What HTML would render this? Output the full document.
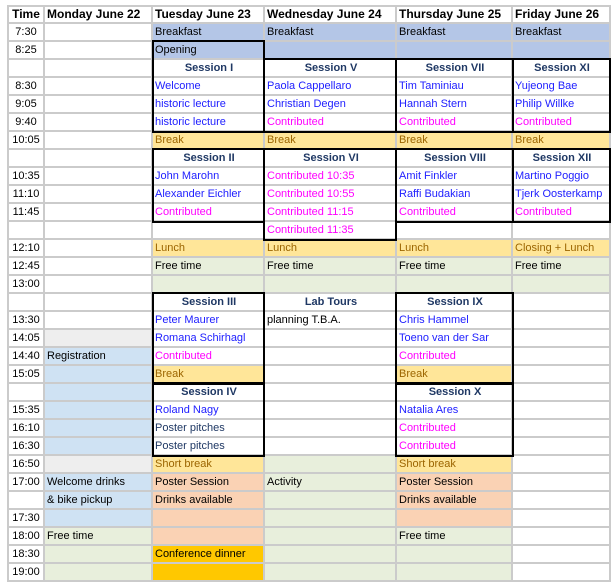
<!DOCTYPE html>
<html><head><meta charset="utf-8"><style>
html,body{margin:0;padding:0;background:#fff;width:616px;height:587px;overflow:hidden;position:relative}
table{position:absolute;left:7px;top:5px;border-collapse:collapse;table-layout:fixed;font-family:"Liberation Sans",Arial,sans-serif;font-size:11px;border:2px solid #cbcbcb}
td{border:2px solid #cbcbcb;height:16px;padding:0 0 0 2px;white-space:nowrap;overflow:hidden;line-height:16px;color:#000}
tr.h td{height:15px;font-weight:bold;font-size:12px;line-height:15px}
td.t{text-align:center;padding:0}
.B{background:#b4c6e7}.Y{background:#ffe699;color:#9c6500}.G{background:#e8efdc}.P{background:#fad2b4}.O{background:#ffc800}
.L{background:#cfe2f3}.g{background:#eeeeee}
.bl{color:#2020ff}.m{color:#ff00ff}.n{color:#1f3864}
.s{text-align:center;font-weight:bold;color:#1f3864}
.k{text-align:center;font-weight:bold;color:#1f3864}
.box{position:absolute;border:2px solid #000;box-sizing:border-box;pointer-events:none}
</style></head><body>
<table>
<colgroup><col style="width:36px"><col style="width:108px"><col style="width:112px"><col style="width:132px"><col style="width:116px"><col style="width:98px"></colgroup>
<tr class="h"><td class="t">Time</td><td>Monday June 22</td><td>Tuesday June 23</td><td>Wednesday June 24</td><td>Thursday June 25</td><td>Friday June 26</td></tr>
<tr><td class="t">7:30</td><td></td><td class="B">Breakfast</td><td class="B">Breakfast</td><td class="B">Breakfast</td><td class="B">Breakfast</td></tr>
<tr><td class="t">8:25</td><td></td><td class="B">Opening</td><td class="B"></td><td class="B"></td><td class="B"></td></tr>
<tr><td class="t"></td><td></td><td class="s">Session I</td><td class="s">Session V</td><td class="s">Session VII</td><td class="s">Session XI</td></tr>
<tr><td class="t">8:30</td><td></td><td class="bl">Welcome</td><td class="bl">Paola Cappellaro</td><td class="bl">Tim Taminiau</td><td class="bl">Yujeong Bae</td></tr>
<tr><td class="t">9:05</td><td></td><td class="bl">historic lecture</td><td class="bl">Christian Degen</td><td class="bl">Hannah Stern</td><td class="bl">Philip Willke</td></tr>
<tr><td class="t">9:40</td><td></td><td class="bl">historic lecture</td><td class="m">Contributed</td><td class="m">Contributed</td><td class="m">Contributed</td></tr>
<tr><td class="t">10:05</td><td></td><td class="Y">Break</td><td class="Y">Break</td><td class="Y">Break</td><td class="Y">Break</td></tr>
<tr><td class="t"></td><td></td><td class="s">Session II</td><td class="s">Session VI</td><td class="s">Session VIII</td><td class="s">Session XII</td></tr>
<tr><td class="t">10:35</td><td></td><td class="bl">John Marohn</td><td class="m">Contributed 10:35</td><td class="bl">Amit Finkler</td><td class="bl">Martino Poggio</td></tr>
<tr><td class="t">11:10</td><td></td><td class="bl">Alexander Eichler</td><td class="m">Contributed 10:55</td><td class="bl">Raffi Budakian</td><td class="bl">Tjerk Oosterkamp</td></tr>
<tr><td class="t">11:45</td><td></td><td class="m">Contributed</td><td class="m">Contributed 11:15</td><td class="m">Contributed</td><td class="m">Contributed</td></tr>
<tr><td class="t"></td><td></td><td></td><td class="m">Contributed 11:35</td><td></td><td></td></tr>
<tr><td class="t">12:10</td><td></td><td class="Y">Lunch</td><td class="Y">Lunch</td><td class="Y">Lunch</td><td class="Y">Closing + Lunch</td></tr>
<tr><td class="t">12:45</td><td></td><td class="G">Free time</td><td class="G">Free time</td><td class="G">Free time</td><td class="G">Free time</td></tr>
<tr><td class="t">13:00</td><td></td><td class="G"></td><td class="G"></td><td class="G"></td><td class="G"></td></tr>
<tr><td class="t"></td><td></td><td class="s">Session III</td><td class="k">Lab Tours</td><td class="s">Session IX</td><td></td></tr>
<tr><td class="t">13:30</td><td></td><td class="bl">Peter Maurer</td><td>planning T.B.A.</td><td class="bl">Chris Hammel</td><td></td></tr>
<tr><td class="t">14:05</td><td class="g"></td><td class="bl">Romana Schirhagl</td><td></td><td class="bl">Toeno van der Sar</td><td></td></tr>
<tr><td class="t">14:40</td><td class="L">Registration</td><td class="m">Contributed</td><td></td><td class="m">Contributed</td><td></td></tr>
<tr><td class="t">15:05</td><td class="L"></td><td class="Y">Break</td><td></td><td class="Y">Break</td><td></td></tr>
<tr><td class="t"></td><td class="L"></td><td class="s">Session IV</td><td></td><td class="s">Session X</td><td></td></tr>
<tr><td class="t">15:35</td><td class="L"></td><td class="bl">Roland Nagy</td><td></td><td class="bl">Natalia Ares</td><td></td></tr>
<tr><td class="t">16:10</td><td class="L"></td><td class="n">Poster pitches</td><td></td><td class="m">Contributed</td><td></td></tr>
<tr><td class="t">16:30</td><td class="L"></td><td class="n">Poster pitches</td><td></td><td class="m">Contributed</td><td></td></tr>
<tr><td class="t">16:50</td><td class="g"></td><td class="Y">Short break</td><td class="G"></td><td class="Y">Short break</td><td></td></tr>
<tr><td class="t">17:00</td><td class="L">Welcome drinks</td><td class="P">Poster Session</td><td class="G">Activity</td><td class="P">Poster Session</td><td></td></tr>
<tr><td class="t"></td><td class="L">&amp; bike pickup</td><td class="P">Drinks available</td><td class="G"></td><td class="P">Drinks available</td><td></td></tr>
<tr><td class="t">17:30</td><td class="L"></td><td class="P"></td><td class="G"></td><td class="P"></td><td></td></tr>
<tr><td class="t">18:00</td><td class="G">Free time</td><td class="P"></td><td class="G"></td><td class="G">Free time</td><td></td></tr>
<tr><td class="t">18:30</td><td class="G"></td><td class="O">Conference dinner</td><td class="G"></td><td class="G"></td><td></td></tr>
<tr><td class="t">19:00</td><td class="G"></td><td class="O"></td><td class="G"></td><td class="G"></td><td></td></tr>
</table>
<div class="box" style="left:152px;top:40px;width:113px;height:93px"></div>
<div class="box" style="left:263px;top:58px;width:134px;height:75px"></div>
<div class="box" style="left:395px;top:58px;width:119px;height:75px"></div>
<div class="box" style="left:512px;top:58px;width:99px;height:75px"></div>
<div class="box" style="left:152px;top:148px;width:113px;height:75px"></div>
<div class="box" style="left:263px;top:148px;width:134px;height:93px"></div>
<div class="box" style="left:395px;top:148px;width:119px;height:75px"></div>
<div class="box" style="left:512px;top:148px;width:99px;height:75px"></div>
<div class="box" style="left:152px;top:292px;width:113px;height:93px"></div>
<div class="box" style="left:395px;top:292px;width:119px;height:93px"></div>
<div class="box" style="left:152px;top:382px;width:113px;height:75px"></div>
<div class="box" style="left:395px;top:382px;width:119px;height:75px"></div>
</body></html>
